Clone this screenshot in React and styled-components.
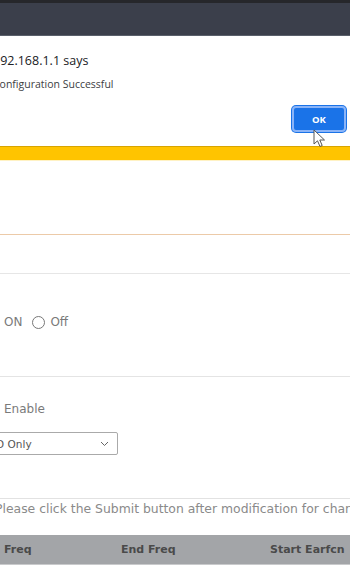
import React from 'react';
import styled, { createGlobalStyle } from 'styled-components';

const Global = createGlobalStyle`
  html, body {
    margin: 0;
    padding: 0;
    background: #fff;
    overflow: hidden;
  }
`;

const Screen = styled.div`
  position: relative;
  width: 350px;
  height: 567px;
  overflow: hidden;
  background: #fff;
`;

// browser chrome above the alert
const BrowserBar = styled.div`
  height: 32px;
  background: #3b3f4b;
  border-top: 3px solid #26272b;
  border-bottom: 1px solid #5a606b;
`;

const Dialog = styled.div`
  height: 110px;
  box-sizing: border-box;
  padding: 16px 4px 0 0;
  margin-left: -7px;
  font-family: "Open Sans", "Noto Sans", sans-serif;
  display: flex;
  flex-direction: column;
`;

const Title = styled.div`
  font-size: 12.5px;
  color: #202124;
  line-height: 17px;
`;

const Message = styled.div`
  margin-top: 8px;
  font-size: 10.5px;
  color: #3c4043;
  line-height: 14px;
`;

const Actions = styled.div`
  margin-top: 15px;
  display: flex;
  justify-content: flex-end;
`;

const OkButton = styled.button`
  width: 54px;
  height: 26px;
  border-radius: 4px;
  background: #1a73e8;
  border: 2px solid #8ab4f8;
  box-shadow: 0 0 0 1px #1a73e8;
  color: #fff;
  font-family: "Open Sans", sans-serif;
  font-weight: 700;
  font-size: 9.5px;
  padding: 0;
`;

const Cursor = styled.svg`
  position: absolute;
  left: 313px;
  top: 129px;
`;

const Band = styled.div`
  height: 13px;
  background: #ffc400;
  border-top: 1px solid #d7a400;
  border-bottom: 1px solid #fff2c4;
`;

const Section = styled.div`
  height: ${p => p.$h}px;
  border-bottom: ${p => p.$line || '1px solid #e4e4e4'};
  box-sizing: border-box;
  font-family: "DejaVu Sans", Lato, sans-serif;
  color: #7a7a7a;
  font-size: 12px;
  display: flex;
  flex-direction: column;
  padding-top: ${p => p.$pt || 0}px;
`;

const RadioRow = styled.div`
  display: flex;
  align-items: center;
  margin-left: 4px;
`;

const Radio = styled.span`
  width: 11px;
  height: 11px;
  border: 1px solid #777;
  border-radius: 50%;
  margin: 2px 5px 0 10px;
`;

const FieldLabel = styled.div`
  margin-left: 4px;
`;

const Select = styled.div`
  margin-top: 16px;
  margin-left: -40px;
  width: 158px;
  height: 23px;
  box-sizing: border-box;
  border: 1px solid #aaa;
  border-radius: 2px;
  display: flex;
  align-items: center;
  justify-content: space-between;
  padding: 0 8px 0 0;
  font-size: 10.5px;
  color: #555;
`;

const SelectText = styled.span`
  margin-left: 21px;
`;

const Note = styled.div`
  margin: 2px 0 0 -5px;
  white-space: nowrap;
  font-family: "DejaVu Sans", Lato, sans-serif;
  font-size: 12.4px;
  color: #8a8a8a;
  height: 34px;
`;

const TableHead = styled.div`
  height: 29px;
  background: #a3a5a8;
  display: flex;
  align-items: center;
  font-family: "DejaVu Sans", Lato, sans-serif;
  font-weight: 700;
  font-size: 11px;
  color: #4a4a4a;
  border-bottom: 1px solid #c9cacc;
  white-space: nowrap;
`;

const HeadCell = styled.span`
  flex: 0 0 ${p => p.$w}px;
`;

export default function App() {
  return (
    <Screen>
      <Global />
      <BrowserBar />
      <Dialog>
        <Title>192.168.1.1 says</Title>
        <Message>Configuration Successful</Message>
        <Actions>
          <OkButton>OK</OkButton>
        </Actions>
      </Dialog>
      <Cursor width="14" height="20" viewBox="0 0 14 20">
        <path d="M1 1 L1 15 L4.5 11.8 L7 17.5 L9.2 16.5 L6.8 11 L11.5 11 Z" fill="#fff" stroke="#555" strokeWidth="1" strokeLinejoin="round" />
      </Cursor>
      <Band />
      <Section $h={74} $line="1.5px solid #eccaa8" />
      <Section $h={39} $line="1.5px solid #e6e6e6" />
      <Section $h={103} $pt={40}>
        <RadioRow>
          <span>ON</span>
          <Radio />
          <span>Off</span>
        </RadioRow>
      </Section>
      <Section $h={122} $line="1px solid #e2e2e2" $pt={25}>
        <FieldLabel>Enable</FieldLabel>
        <Select>
          <SelectText>FDD Only</SelectText>
          <svg width="9" height="6" viewBox="0 0 9 6">
            <path d="M1 1 L4.5 4.5 L8 1" fill="none" stroke="#666" strokeWidth="1" />
          </svg>
        </Select>
      </Section>
      <Note>Please click the Submit button after modification for changes to take effect</Note>
      <TableHead>
        <HeadCell $w={4} />
        <HeadCell $w={117}>Freq</HeadCell>
        <HeadCell $w={149}>End Freq</HeadCell>
        <HeadCell $w={80}>Start Earfcn</HeadCell>
      </TableHead>
    </Screen>
  );
}
